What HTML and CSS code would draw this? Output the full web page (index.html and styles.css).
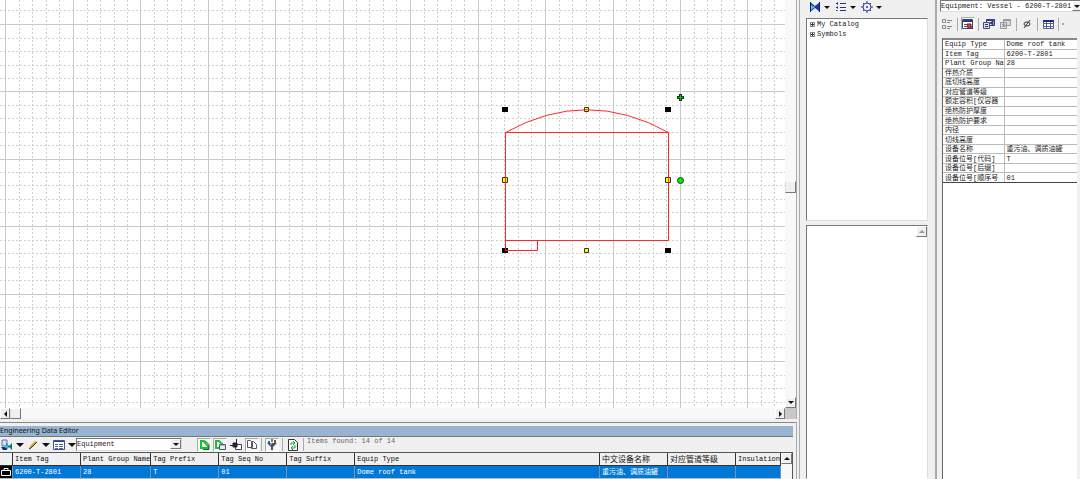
FILE: index.html
```html
<!DOCTYPE html>
<html lang="zh-CN">
<head>
<meta charset="utf-8">
<title>Engineering Data Editor</title>
<link rel="stylesheet" href="styles.css">
</head>
<body>
<div class="app">
  <main class="workspace">
    <section class="drawing" aria-label="Drawing">
      <div class="canvas">
        <svg class="sheet" width="2000" height="408" aria-label="Dome roof tank">
          <defs>
            <path id="minor-x" d="M14.5 0V408M27.5 0V408M41.5 0V408M54.5 0V408"/>
            <path id="minor-y" d="M0 14H2000M0 27H2000M0 41H2000M0 54H2000"/>
          </defs>
          <g class="grid-minor">
            <use href="#minor-x" x="-62"/><use href="#minor-x" x="5"/><use href="#minor-x" x="73"/><use href="#minor-x" x="140"/><use href="#minor-x" x="208"/><use href="#minor-x" x="275"/><use href="#minor-x" x="342"/><use href="#minor-x" x="410"/><use href="#minor-x" x="477"/><use href="#minor-x" x="545"/><use href="#minor-x" x="612"/><use href="#minor-x" x="680"/><use href="#minor-x" x="747"/>
            <path d="M0 10.500H2000"/>
            <use href="#minor-y" y="24.500"/><use href="#minor-y" y="91.500"/><use href="#minor-y" y="158.500"/><use href="#minor-y" y="226.500"/><use href="#minor-y" y="293.500"/><use href="#minor-y" y="361.500"/>
          </g>
          <path class="grid-major" d="M5.500 0V408M73.500 0V408M140.500 0V408M208.500 0V408M275.500 0V408M343.500 0V408M410.500 0V408M478.500 0V408M545.500 0V408M613.500 0V408M680.500 0V408M747.500 0V408M0 24.500H2000M0 91.500H2000M0 159.500H2000M0 226.500H2000M0 294.500H2000M0 361.500H2000"/>
          <g class="handle-dark"><path d="M502 107h6v5h-6zM665 107h6v5h-6zM502 248h6v5h-6zM665 248h6v5h-6z"/></g>
          <g class="handle"><path d="M584.500 107.500h4v4h-4zM502.500 177.500h5v5h-5zM665.500 177.500h5v5h-5zM584.500 248.500h4v4h-4z"/></g>
          <path class="vessel" d="M505.500 250.500V132.500H668.500V240.500H505.500M505.500 132.500Q587 87 668.500 132.500M505.500 250.500H537.500V240.500"/>
          <path class="pin" d="M680.500 94v7M677 97.500h7"/>
          <path class="pin-core" d="M680.500 95v5M678 97.500h5"/>
          <circle class="rotate" cx="680.500" cy="180.500" r="3"/>
        </svg>
      </div>
      <div class="vscroll">
        <button class="thumb" aria-label="Vertical position"></button>
        <button class="arrow" aria-label="Scroll down"><i class="tri down"></i></button>
      </div>
      <div class="hscroll">
        <button class="arrow" aria-label="Scroll left"><i class="tri left"></i></button>
        <button class="thumb" aria-label="Horizontal position"></button>
        <button class="arrow last" aria-label="Scroll right"><i class="tri right"></i></button>
      </div>
      <div class="corner"></div>
    </section>
    <section class="editor">
      <h1 class="caption">Engineering Data Editor</h1>
      <div class="tools">
        <button class="tool" aria-label="Select view"><svg width="12" height="12"><path d="M1 1h5v6H1z" fill="#d8e4ff" stroke="#5570b8"/><path d="M0 8h6v3H2z" fill="#142a90"/><path d="M5 4l3 3 3-3v7L8 8l-3 3z" fill="#0a766f"/><path d="M4 6h3v3H4z" fill="#31b8da"/></svg></button>
        <i class="tri down big"></i>
        <button class="tool" aria-label="Edit"><svg width="10" height="10"><path d="M1 9l1-3 5-5 2 1-6 6z" fill="#c9a92c"/><path d="M1 9l2-1 6-6" stroke="#493719" fill="none"/></svg></button>
        <i class="tri down big"></i>
        <button class="tool" aria-label="Layout"><svg width="12" height="10"><path d="M.5.5h11v9H.5z" fill="#fff" stroke="#44558c"/><path d="M1 1.500h10" stroke="#233b99"/><path d="M2 4.500h3m1 0h4M2 6.500h3m1 0h4M2 8.500h3m1 0h4" stroke="#52618c"/></svg></button>
        <i class="tri down big"></i>
        <label class="combo type"><select aria-label="Item type"><option>Equipment</option></select><span class="arrow"><i class="tri down"></i></span></label>
        <button class="tool pressed" aria-label="New"><svg width="11" height="11"><path d="M2 9V2h3l1 2 3 3v2z" fill="#efffef" stroke="#12c528" stroke-width="2"/><path d="M6 2.500h1l3 3v5H4" fill="none" stroke="#245f29"/></svg></button>
        <button class="tool pressed" aria-label="Copy"><svg width="12" height="12"><path d="M2 9V2h3l3 3v4z" fill="#fff" stroke="#25bc35" stroke-width="2"/><path d="M5.500 5.500h6v5h-6z" fill="#eee" stroke="#4a5066"/><path d="M5 6h7" stroke="#607bb1"/></svg></button>
        <button class="tool" aria-label="Place"><svg width="12" height="12"><path d="M5.500 5.500h6v5h-6z" fill="#fff" stroke="#37425e"/><path d="M0 6.500h5M6.500 0v5M3 4h4v4H3z" stroke="#22242f" fill="#22242f"/></svg></button>
        <button class="tool pressed" aria-label="Duplicate"><svg width="12" height="11"><path d="M1.500 8.500v-7h3l2 2v5zM5.500 9.500v-7h2l3 3v4z" fill="#fff" stroke="#55585f"/></svg></button>
        <span class="rule"></span>
        <button class="tool pressed filter" aria-label="Filter"><svg width="12" height="12"><path d="M1 4h10L7 8v3H5V8z" fill="#395c55"/><path d="M2 2h2v2H2z" fill="#2458d2"/><path d="M5 0h2v3H5z" fill="#27b84a"/><path d="M8 1h2v3H8z" fill="#c83355"/><path d="M4 4h2v2H4z" fill="#c45ad2"/></svg></button>
        <span class="rule"></span>
        <button class="tool refresh" aria-label="Refresh"><svg width="10" height="12"><path d="M.5.5h6l3 3v8h-9z" fill="#fff" stroke="#333"/><path d="M3 6V4h3M5 2l2 2-2 2M7 6v3H4M5 7L3 9l2 2" fill="none" stroke="#189c2b"/></svg></button>
        <span class="rule"></span>
        <span class="status">Items found: 14 of 14</span>
      </div>
      <div class="data">
        <table class="items">
          <colgroup><col class="c-mark"><col class="c-std"><col class="c-std"><col class="c-std"><col class="c-std"><col class="c-std"><col><col class="c-std"><col class="c-std"><col class="c-last"></colgroup>
          <thead><tr><th></th><th>Item Tag</th><th>Plant Group Name</th><th>Tag Prefix</th><th>Tag Seq No</th><th>Tag Suffix</th><th>Equip Type</th><th class="zh">中文设备名称</th><th class="zh">对应管道等级</th><th>Insulation</th></tr></thead>
          <tbody><tr><td class="mark"><svg width="12" height="12"><path d="M1.500 4.500h9v5h-9zM4 4V2.500h4V4" fill="none" stroke="#fff"/></svg></td><td>6200-T-2801</td><td>28</td><td>T</td><td>01</td><td></td><td>Dome roof tank</td><td>重污油、调质油罐</td><td></td><td></td></tr></tbody>
        </table>
        <div class="data-scroll"><button class="arrow" aria-label="Scroll up"><i class="tri up"></i></button></div>
      </div>
    </section>
  </main>

  <aside class="catalog">
    <div class="catalog-tools">
      <button class="tool" aria-label="Symbols"><svg width="12" height="10"><path d="M1 0l5 4 5-4v10L6 6l-5 4z" fill="#203a9b"/><path d="M2 3l4 2-4 3z" fill="#45cbe9"/><path d="M1.500 0v10M10.500 0v10" stroke="#101c70"/></svg></button><i class="tri down"></i>
      <button class="tool" aria-label="List"><svg width="12" height="10"><path d="M1 1.500h2M5 1.500h6M1 5.500h2M5 5.500h6M1 8.500h2M5 8.500h6" stroke="#292f83"/><path d="M2.500 0v10" stroke="#7a80bd" stroke-dasharray="1 1"/></svg></button><i class="tri down"></i>
      <button class="tool" aria-label="Settings"><svg width="12" height="12"><circle cx="6" cy="6" r="4" fill="#eef" stroke="#35359a"/><circle cx="6" cy="6" r="1" fill="#35359a"/><path d="M6 0v2M6 10v2M0 6h2M10 6h2M2 2l1 1M9 9l1 1M10 2L9 3M3 9l-1 1" stroke="#35359a"/></svg></button><i class="tri down"></i>
    </div>
    <ul class="tree"><li><i class="plus"></i>My Catalog</li><li><i class="plus"></i>Symbols</li></ul>
    <div class="preview"><button class="arrow" aria-label="Scroll preview up"><i class="tri up faint"></i></button></div>
  </aside>

  <aside class="props">
    <label class="combo selected"><select aria-label="Selected item"><option>Equipment: Vessel - 6200-T-2801</option></select><span class="arrow"><i class="tri down"></i></span></label>
    <div class="prop-tools">
      <button class="tool" aria-label="Categorized"><svg width="12" height="12"><path d="M1.500 1.500h3v3h-3zM1.500 7.500h3v3h-3zM6 2.500h5M6 4.500h3M6 8.500h5M6 10.500h3" fill="none" stroke="#888"/></svg></button>
      <span class="rule"></span>
      <button class="tool pressed" aria-label="Properties"><svg width="12" height="11"><path d="M.5.5h10v9H.5z" fill="#fff" stroke="#38427c"/><path d="M1 2h10" stroke="#263b90" stroke-width="2"/><path d="M2 5.500h3M2 7.500h3" stroke="#555"/><path d="M5 5h4v4H6zM9 7l2 3" fill="#c94343" stroke="#7d2130"/></svg></button>
      <span class="rule"></span>
      <button class="tool" aria-label="Copy properties"><svg width="12" height="12"><path d="M3.500 1.500h8v6h-8z" fill="#fff" stroke="#303b6d"/><path d="M4 2h7" stroke="#2c3f9e" stroke-width="2"/><path d="M.5 4.500h6v6h-6z" fill="#dde" stroke="#444c75"/><path d="M2 6.500h3M2 8.500h3M7 5l3-2v4z" stroke="#303b6d" fill="#303b6d"/></svg></button>
      <button class="tool" aria-label="Paste properties"><svg width="12" height="12"><path d="M3.500 1.500h7v6h-7zM.5 4.500h6v6h-6z" fill="#ddd" stroke="#999"/><path d="M2 6.500h3M2 8.500h3M4 2.500h6" stroke="#999"/></svg></button>
      <span class="rule"></span>
      <button class="tool" aria-label="Show empty"><svg width="10" height="10"><ellipse cx="5" cy="5" rx="3" ry="2" fill="none" stroke="#333"/><path d="M2 9l6-8" stroke="#333"/></svg></button>
      <span class="rule"></span>
      <button class="tool" aria-label="Table"><svg width="11" height="10"><path d="M.5 1.500h10v8H.5zM1 4.500h9M1 7.500h9M3.500 3v6M7.500 3v6" fill="#fff" stroke="#54618f"/><path d="M0 2h11" stroke="#182b8c" stroke-width="2"/></svg></button>
      <span class="rule"></span><span class="dot"></span>
    </div>
    <div class="sheet-box">
      <table class="attributes">
        <tbody>
          <tr><th>Equip Type</th><td>Dome roof tank</td></tr>
          <tr><th>Item Tag</th><td>6200-T-2801</td></tr>
          <tr><th>Plant Group Na</th><td>28</td></tr>
          <tr><th>伴热介质</th><td></td></tr>
          <tr><th>底切线高度</th><td></td></tr>
          <tr><th>对应管道等级</th><td></td></tr>
          <tr><th>额定容积[仅容器</th><td></td></tr>
          <tr><th>绝热防护厚度</th><td></td></tr>
          <tr><th>绝热防护要求</th><td></td></tr>
          <tr><th>内径</th><td></td></tr>
          <tr><th>切线高度</th><td></td></tr>
          <tr><th>设备名称</th><td>重污油、调质油罐</td></tr>
          <tr><th>设备位号[代码]</th><td>T</td></tr>
          <tr><th>设备位号[后缀]</th><td></td></tr>
          <tr><th>设备位号[顺序号</th><td>01</td></tr>
        </tbody>
      </table>
    </div>
  </aside>
</div>
</body>
</html>
```
FILE: styles.css
```css
* { box-sizing: border-box; }
body { margin: 0; background: #f0f0f0; color: #222; font: 7px/9px "Liberation Mono", "Noto Sans CJK SC", monospace; }
button, select { font: inherit; color: inherit; padding: 0; margin: 0; border: 0; border-radius: 0; background: none; }
svg { display: block; }
.app { display: grid; grid-template-columns: minmax(0, 1fr) 136px 144px; height: 100vh; overflow: hidden; }

/* Shared controls */
.tri { display: block; flex: none; width: 0; height: 0; border: 3px solid transparent; }
.tri.down { border-top-color: #111; border-bottom: 0; }
.tri.up { border-bottom-color: #111; border-top: 0; }
.tri.left { border-right-color: #111; border-left: 0; }
.tri.right { border-left-color: #111; border-right: 0; }
.tri.big { border-width: 4px; border-bottom: 0; }
.tri.faint { border-bottom-color: #999; }
.arrow { display: flex; flex: none; align-items: center; justify-content: center; width: 11px; height: 11px; background: #f0f0f0; border: 1px solid; border-color: #fff #777 #777 #fff; }
.thumb { display: block; width: 11px; height: 12px; background: #f0f0f0; border: 1px solid; border-color: #fff #777 #777 #ddd; }
.tool { display: flex; flex: none; align-items: center; justify-content: center; width: 14px; height: 14px; }
.tool.pressed { background: #f8f8f8; border: 1px solid; border-color: #aaa #fff #fff #aaa; }
.rule { flex: none; width: 1px; height: 13px; background: #aaa; }
.combo { display: flex; height: 12px; background: #fff; border: 1px solid; border-color: #777 #ddd #ddd #777; }
.combo select { flex: 1; min-width: 0; appearance: none; outline: 0; overflow: hidden; }
.combo .arrow { height: 10px; }

/* Drawing */
.workspace { display: flex; flex-direction: column; min-width: 0; padding-right: 2px; border-right: 1px solid #aaa; }
.drawing { flex: 1; min-height: 0; display: grid; grid-template: minmax(0, 1fr) 11px / minmax(0, 1fr) 11px; border-right: 1px solid #aaa; }
.canvas { overflow: hidden; background: #fff; }
.grid-minor { fill: none; stroke: #cfcfcf; stroke-dasharray: 2 2; }
.grid-major { fill: none; stroke: #c9c9c9; }
.vessel { fill: none; stroke: #ff2828; }
.handle-dark { fill: #000; }
.handle { fill: #ff0; stroke: #332; }
.rotate { fill: #00f000; stroke: #154015; }
.pin { stroke: #123b12; stroke-width: 3; }
.pin-core { stroke: #12bb20; }
.vscroll { display: flex; flex-direction: column; justify-content: space-between; padding-top: 181px; background: #f8f8f8; }
.hscroll { display: flex; background: #f8f8f8; }
.hscroll .arrow { width: 10px; }
.hscroll .last { margin-left: auto; }
.hscroll .thumb { height: 11px; }
.corner { background: #c8c8c8; }

/* Data editor */
.editor { flex: none; margin-top: 3px; padding: 3px 3px 0 0; border-top: 1px solid #888; border-right: 1px solid #aaa; }
.caption { margin: 0; height: 11px; font: 7px/10px "Noto Sans", sans-serif; color: #111; background: #99b4d1; border-bottom: 1px solid #777; }
.tools { display: flex; align-items: center; height: 15px; gap: 2px; }
.tools .type { width: 106px; height: 13px; margin: 0 13px 0 -2px; }
.status { align-self: flex-start; color: #666; margin-left: 1px; }
.tools .filter, .tools .refresh { margin: 0 1px; }
.data { display: flex; background: #fff; border-top: 1px solid #555; border-right: 1px solid #555; }
.items { flex: 1; min-width: 0; table-layout: fixed; border-collapse: separate; border-spacing: 0; }
.items .c-mark { width: 13px; }
.items .c-std { width: 68px; }
.items .c-last { width: 40px; }
.items th, .items td { height: 13px; padding: 0 0 0 2px; line-height: 9px; text-align: left; font-weight: 400; overflow: hidden; white-space: nowrap; }
.items th { color: #111; background: #f0f0f0; border-right: 1px solid #333; border-bottom: 1px solid #333; }
.items td { color: #fff; background: #0078d7; border-right: 1px solid #7793ad; border-bottom: 1px solid #bbb; }
.items th.zh { font-size: 8px; }
.items .mark { padding: 0; background: #000; }
.data-scroll { flex: none; width: 11px; background: #f8f8f8; }

/* Catalog */
.catalog { display: flex; flex-direction: column; padding: 0 7px 0 6px; border-right: 1px solid #aaa; }
.catalog-tools { display: flex; align-items: center; height: 14px; gap: 2px; padding-left: 2px; margin-bottom: 4px; }
.catalog-tools .tri { margin-right: 2px; }
.tree { flex: none; height: 203px; margin: 0 0 4px; padding: 0 0 0 3px; list-style: none; background: #fff; border: 1px solid; border-color: #777 #ddd #ddd #777; }
.tree li { display: flex; align-items: center; gap: 2px; height: 10px; }
.plus { display: block; width: 5px; height: 5px; border: 1px solid #888; background: linear-gradient(#333, #333) center / 3px 1px no-repeat, linear-gradient(#333, #333) center / 1px 3px no-repeat; }
.preview { flex: 1; display: flex; justify-content: flex-end; background: #fff; border: 1px solid; border-color: #777 #ddd #fff #777; }

/* Properties */
.props { display: flex; flex-direction: column; min-width: 0; padding-left: 3px; border-left: 1px solid #aaa; }
.selected { border-right: 0; }
.selected .arrow { width: 8px; border-right: 0; }
.prop-tools { display: flex; align-items: center; gap: 3px; height: 14px; margin: 5px 0 7px; }
.dot { width: 2px; height: 2px; background: #aaa; }
.sheet-box { flex: 1; margin: 0 3px 0 2px; background: #fff; border-left: 1px solid #666; }
.attributes { width: 100%; height: 145px; table-layout: fixed; border-collapse: collapse; border-top: 2px solid #888; border-bottom: 1px solid #444; }
.attributes th { width: 61px; border-right: 1px solid #bbb; }
.attributes th, .attributes td { height: 9px; padding: 0 0 0 2px; line-height: 8px; text-align: left; font-weight: 400; white-space: nowrap; overflow: hidden; border-bottom: 1px solid #bbb; }
.attributes tr:last-child > * { border-bottom-color: #444; }
```
